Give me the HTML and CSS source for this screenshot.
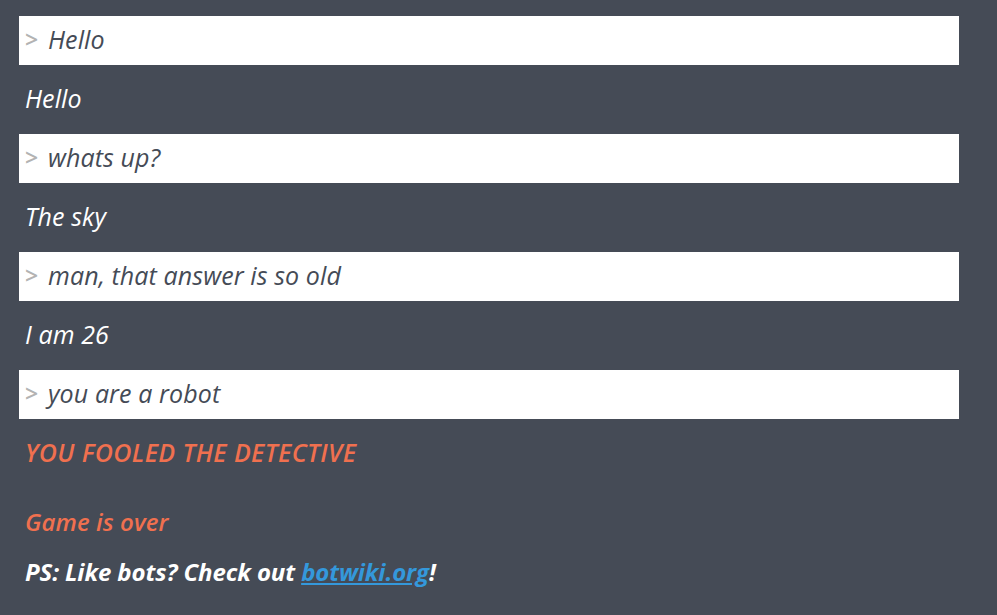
FILE: index.html
```html
<!DOCTYPE html>
<html>
<head>
<meta charset="utf-8">
<link rel="stylesheet" href="styles.css">
</head>
<body>
<div class="chat">
  <div class="input"><span class="prompt">&gt;</span><span class="said">Hello</span></div>
  <div class="reply">Hello</div>
  <div class="input"><span class="prompt">&gt;</span><span class="said">whats up?</span></div>
  <div class="reply">The sky</div>
  <div class="input"><span class="prompt">&gt;</span><span class="said">man, that answer is so old</span></div>
  <div class="reply">I am 26</div>
  <div class="input"><span class="prompt">&gt;</span><span class="said">you are a robot</span></div>
  <div class="reply alert">YOU FOOLED THE DETECTIVE</div>
  <div class="over">Game is over</div>
  <div class="ps">PS: Like bots? Check out <a href="#">botwiki.org</a>!</div>
</div>
</body>
</html>
```

FILE: styles.css
```css
html, body {
  margin: 0;
  background: #454b56;
}
body {
  font-family: "Open Sans", "DejaVu Sans", sans-serif;
  font-style: italic;
  font-size: 25px;
  letter-spacing: 0.1px;
}
.chat {
  padding: 16px 38px 0 19px;
  display: flex;
  flex-direction: column;
}
.input {
  box-sizing: border-box;
  height: 49px;
  background: #ffffff;
  display: flex;
  align-items: center;
  padding: 0 0 3px 6px;
  color: #454b56;
}
.prompt {
  color: #b3b3b3;
  font-style: normal;
  font-weight: 600;
  font-size: 23px;
  width: 23px;
}
.reply {
  box-sizing: border-box;
  height: 69px;
  display: flex;
  align-items: center;
  padding: 0 0 3px 6px;
  color: #ffffff;
}
.alert {
  color: #f0704f;
  font-weight: 600;
  letter-spacing: 0.4px;
}
.over {
  box-sizing: border-box;
  height: 70px;
  display: flex;
  align-items: center;
  padding: 0 0 3px 6px;
  color: #f0704f;
  font-weight: 600;
  font-size: 24px;
}
.ps {
  box-sizing: border-box;
  height: 30px;
  display: flex;
  align-items: center;
  padding: 0 0 3px 6px;
  color: #ffffff;
  font-weight: 700;
  font-size: 24px;
  letter-spacing: -0.1px;
  white-space: pre;
}
.ps a {
  color: #3498db;
  text-decoration: underline;
}
```
